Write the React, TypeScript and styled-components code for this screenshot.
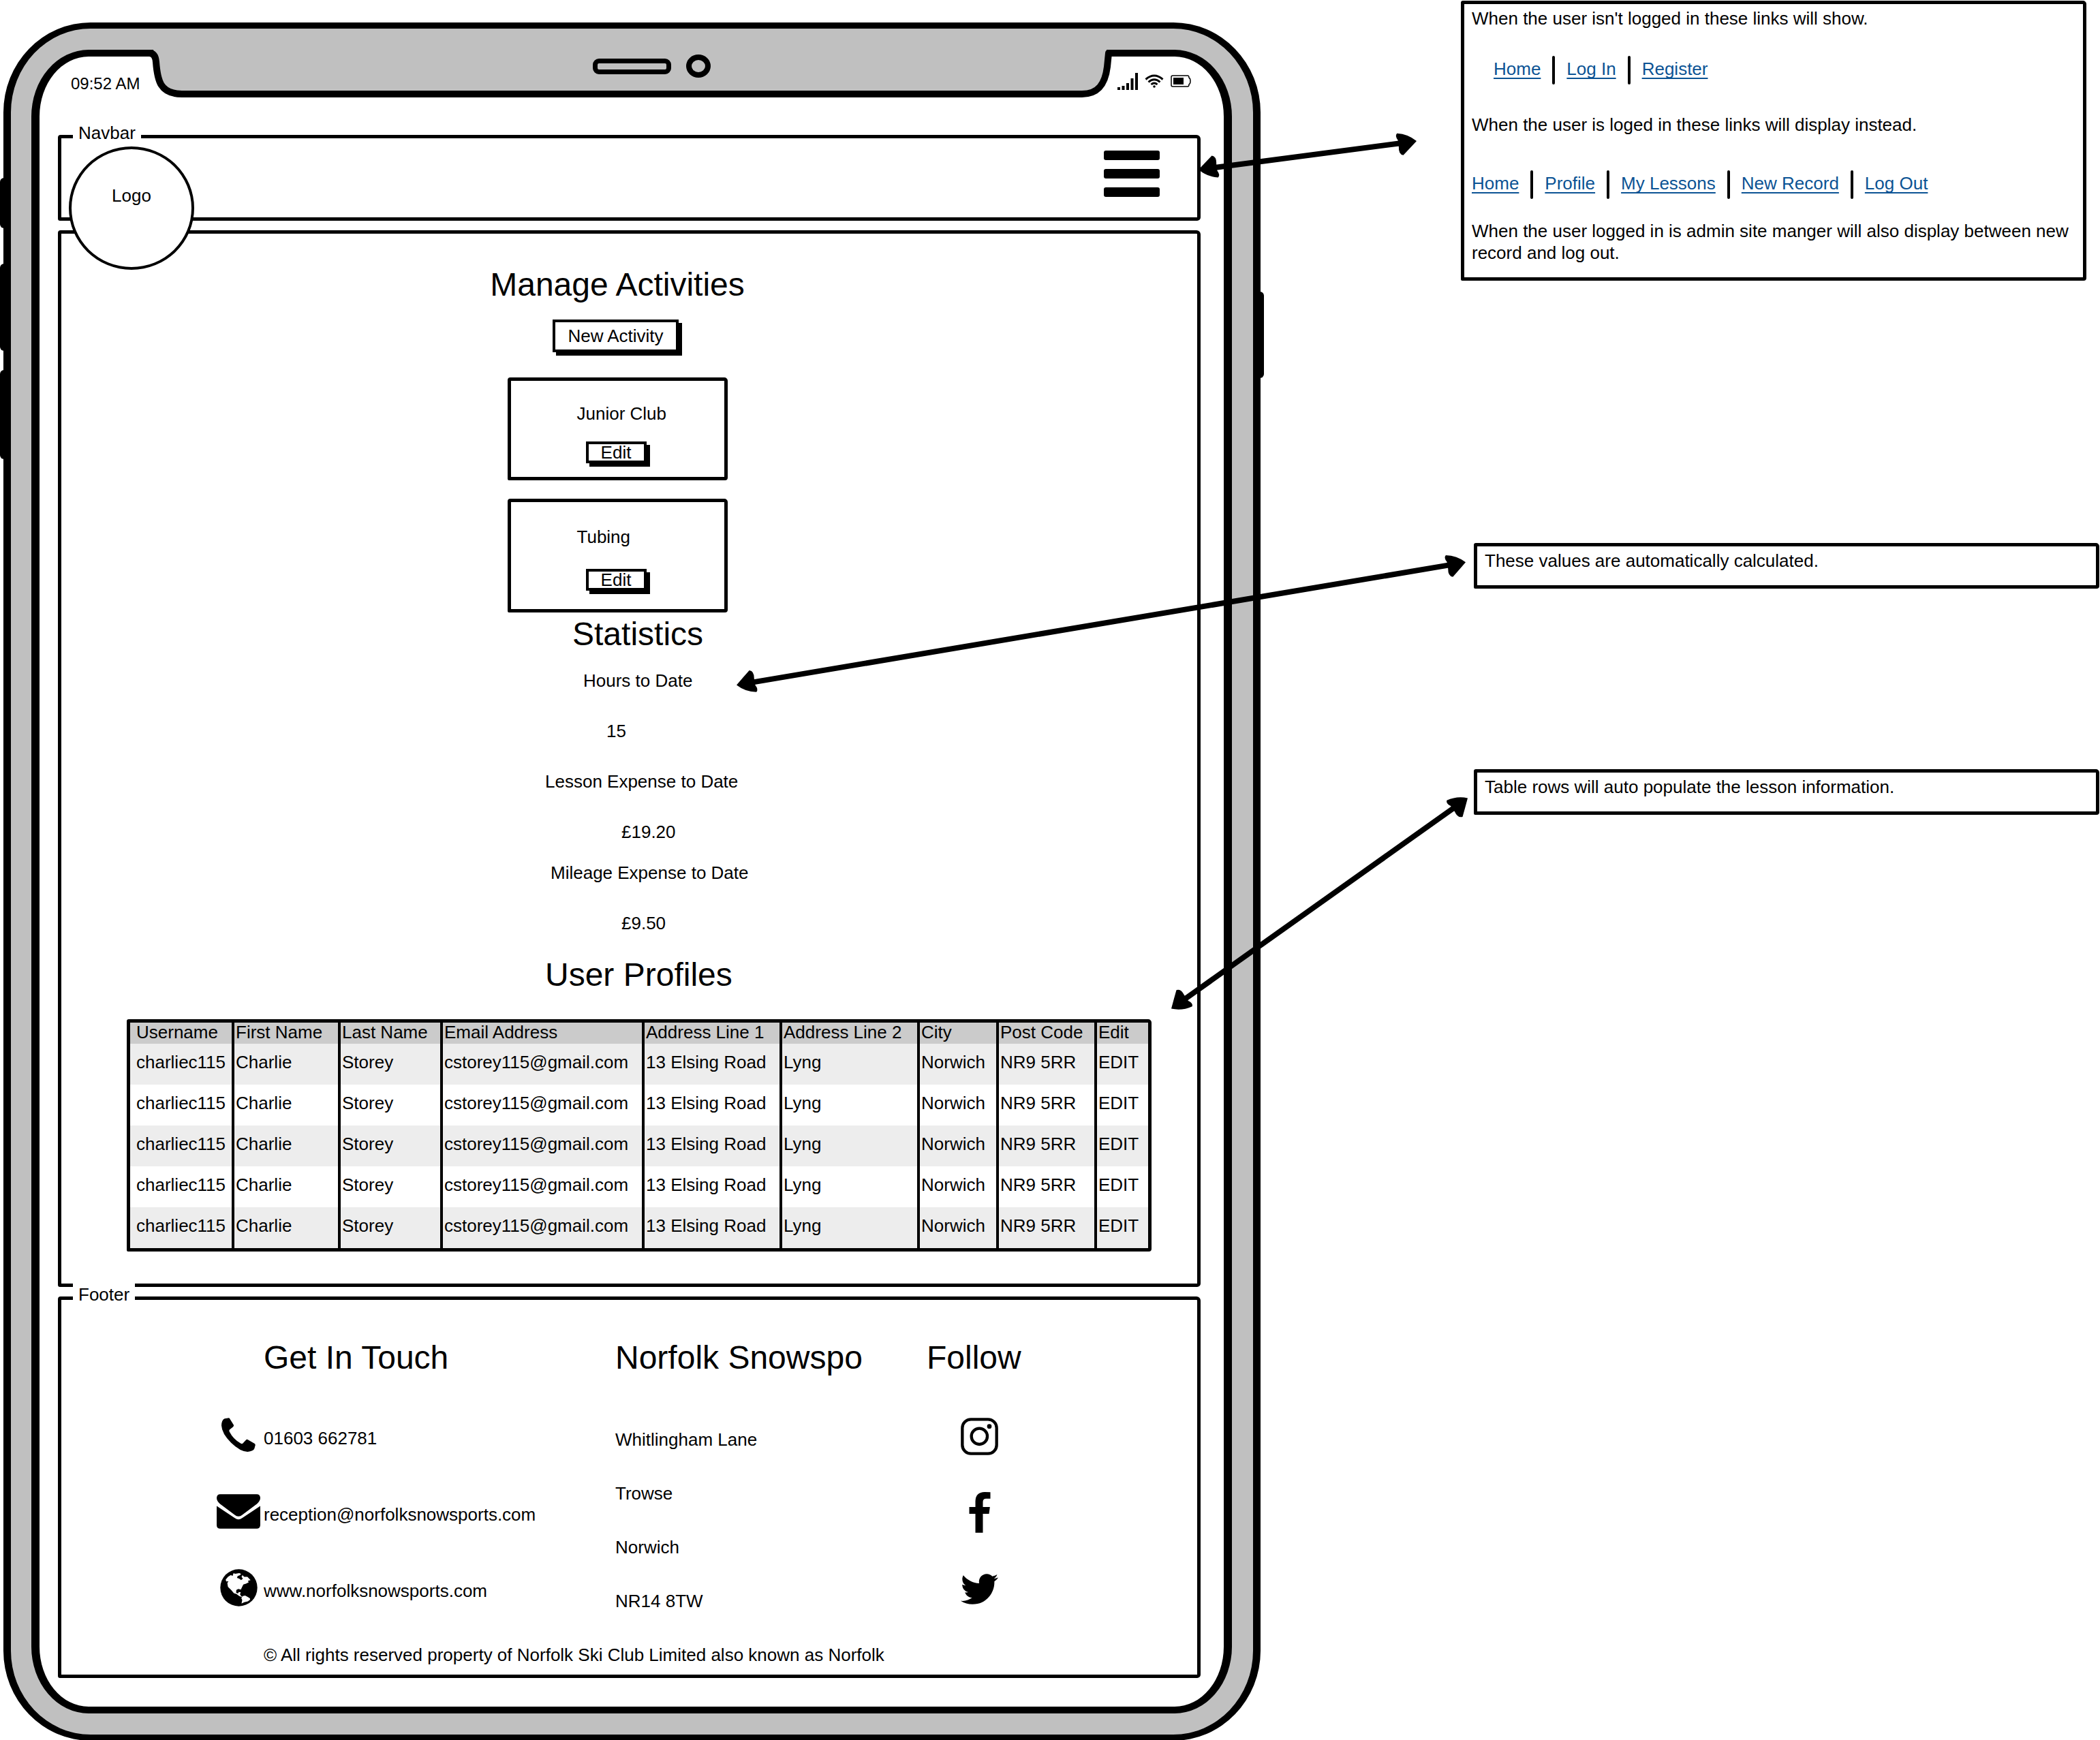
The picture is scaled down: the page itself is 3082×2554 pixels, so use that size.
import React from "react";
import styled, { createGlobalStyle } from "styled-components";
import { FaTwitter } from "react-icons/fa";

const INK = "#000000";
const METAL = "#c0c0c0";

const GlobalStyle = createGlobalStyle`
  *, *::before, *::after { box-sizing: border-box; }
  body { margin: 0; background: #ffffff; }
  body, button {
    font-family: "Liberation Sans", Arial, sans-serif;
    font-size: 26px;
    line-height: 32px;
    color: ${INK};
  }
  h1, h2, p, dl, dt, dd, ul { margin: 0; padding: 0; font-weight: 400; }
  ul { list-style: none; }
  svg { display: block; }
`;

/* ---------- page ---------- */

const Page = styled.div`
  position: relative;
  display: grid;
  grid-template-columns: 1845fr 937fr;
  column-gap: 294px;
  align-items: start;
  padding: 0 1px 0 5px;
`;

const Arrows = styled.svg`
  position: absolute;
  inset: 0;
  width: 100%;
  height: 100%;
  pointer-events: none;
`;

/* ---------- tablet ---------- */

const Tablet = styled.div`
  position: relative;
  margin-top: 33px;
  padding: 31px 31px 31px 30px;
  border: solid ${INK};
  border-width: 9px 11px;
  border-radius: 128px / 132px;
  background: ${METAL};
`;

const SideKey = styled.span<{ $side: "left" | "right"; $top: number; $height: number }>`
  position: absolute;
  ${(p) => p.$side}: -16px;
  top: ${(p) => p.$top}px;
  width: 15px;
  height: ${(p) => p.$height}px;
  border-radius: 6px;
  background: ${INK};
`;

const Screen = styled.div`
  position: relative;
  padding: 0 34px 42px 27px;
  border: solid ${INK};
  border-width: 10px 12px;
  border-radius: 84px / 98px;
  background: #ffffff;
`;

const Notch = styled.div`
  position: absolute;
  top: -10px;
  left: 147px;
  right: 156px;
  display: flex;
`;

const NotchBody = styled.div`
  flex: 1;
  display: flex;
  align-items: center;
  justify-content: center;
  gap: 22px;
  height: 70px;
  padding: 0 0 12px 62px;
  border-bottom: 10px solid ${INK};
  background: ${METAL};
`;

const Speaker = styled.span`
  width: 115px;
  height: 23px;
  border: 7px solid ${INK};
  border-radius: 9px;
`;

const Camera = styled.span`
  width: 36px;
  height: 34px;
  border: 8px solid ${INK};
  border-radius: 50%;
`;

const StatusBar = styled.div`
  display: flex;
  justify-content: space-between;
  align-items: flex-start;
  height: 115px;
  padding: 24px 14px 0 19px;
  font-size: 24px;
`;

const StatusIcons = styled.div`
  display: flex;
  align-items: center;
  gap: 10px;
  height: 24px;
`;

/* ---------- wireframe panels ---------- */

const Panels = styled.div`
  display: flex;
  flex-direction: column;
  gap: 14px;
`;

const Panel = styled.div`
  position: relative;
  border: solid ${INK};
  border-width: 5px;
  border-radius: 4px 6px 5px 3px;
`;

const PanelLabel = styled.span`
  position: absolute;
  top: -24px;
  left: 17px;
  padding: 0 8px;
  background: #ffffff;
`;

const NavPanel = styled(Panel).attrs({ as: "nav" })`
  display: flex;
  justify-content: flex-end;
  padding: 18px 55px 30px 0;
`;

const Logo = styled.div`
  position: absolute;
  z-index: 1;
  top: 12px;
  left: 11px;
  width: 184px;
  height: 181px;
  padding-top: 52px;
  border: 4px solid ${INK};
  border-radius: 50%;
  background: #ffffff;
  text-align: center;
`;

const MenuButton = styled.button`
  display: flex;
  flex-direction: column;
  gap: 13px;
  width: 82px;
  padding: 0;
  border: 0;
  background: none;
`;

const MenuBar = styled.span`
  height: 14px;
  border-radius: 3px;
  background: ${INK};
`;

const MainPanel = styled(Panel).attrs({ as: "main" })`
  padding: 47px 0;
`;

const Title = styled.h1`
  font-size: 48px;
  line-height: 56px;
  white-space: nowrap;
`;

const Heading = styled(Title).attrs({ as: "h2" })<{ $indent?: number }>`
  margin-left: ${(p) => p.$indent ?? 0}px;
`;

const Activities = styled.section`
  display: flex;
  flex-direction: column;
  align-items: center;
  margin-right: 35px;
`;

const SketchButton = styled.button`
  padding: 0 18px;
  border: 4px solid ${INK};
  background: #ffffff;
  box-shadow: 5px 5px 0 ${INK};
  white-space: nowrap;
`;

const NewActivity = styled(SketchButton)`
  height: 48px;
  margin: 23px 5px 37px 0;
`;

const EditButton = styled(SketchButton)`
  width: 89px;
  height: 32px;
  margin-left: 13px;
  line-height: 24px;
`;

const ActivityCards = styled.div`
  display: flex;
  flex-direction: column;
  gap: 27px;
`;

const ActivityCard = styled.article<{ $roomy?: boolean }>`
  display: flex;
  flex-direction: column;
  align-items: flex-start;
  gap: ${(p) => (p.$roomy ? 31 : 25)}px;
  width: 323px;
  padding: ${(p) => (p.$roomy ? "35px 0 27px 97px" : "32px 0 20px 97px")};
  border: 5px solid ${INK};
  border-radius: 4px 5px 4px 2px;
`;

const Statistics = styled.section`
  width: 320px;
  margin: 4px auto 32px 710px;
`;

const StatList = styled.dl`
  padding-top: 24px;
`;

const StatName = styled.dt<{ $indent: number; $gap: number }>`
  margin: ${(p) => p.$gap}px 0 0 ${(p) => p.$indent}px;
  white-space: nowrap;
`;

const StatValue = styled.dd<{ $indent: number }>`
  margin: 42px 0 0 ${(p) => p.$indent}px;
`;

/* ---------- profile table ---------- */

const TableFrame = styled.div`
  margin: 37px 67px 0 96px;
  border: 5px solid ${INK};
  border-radius: 3px 5px 4px 2px;
`;

const ProfileTable = styled.table`
  width: 100%;
  table-layout: fixed;
  border-spacing: 0;
`;

const cell = `
  padding: 0 0 0 2px;
  border-right: 4px solid ${INK};
  text-align: left;
  vertical-align: top;
  font-weight: 400;
  white-space: nowrap;
  &:first-child { padding-left: 9px; }
  &:last-child { border-right: 0; }
`;

const HeadCell = styled.th`
  ${cell}
  height: 31px;
  line-height: 28px;
  background: #cbcbcb;
`;

const BodyCell = styled.td`
  ${cell}
  && { padding-top: 11px; }
  height: 60px;
`;

const BodyRow = styled.tr`
  &:nth-child(odd) { background: #ededed; }
`;

/* ---------- footer ---------- */

const FooterPanel = styled(Panel).attrs({ as: "footer" })`
  padding: 57px 0 13px 228px;
`;

const FooterColumns = styled.div`
  display: grid;
  grid-template-columns: 585fr 457fr 397fr;
`;

const ContactList = styled.ul`
  display: flex;
  flex-direction: column;
  gap: 56px;
  padding-top: 57px;
`;

const ContactRow = styled.li`
  display: flex;
  align-items: center;
  gap: 5px;
  height: 56px;
`;

const ContactIcon = styled.span`
  display: flex;
  justify-content: center;
  width: 64px;
`;

const ContactText = styled.span`
  padding-top: 10px;
`;

const AddressList = styled.div`
  display: flex;
  flex-direction: column;
  gap: 47px;
  padding-top: 76px;
`;

const SocialList = styled.ul`
  display: flex;
  flex-direction: column;
  gap: 52px;
  width: 155px;
  padding-top: 57px;
`;

const SocialRow = styled.li`
  display: flex;
  align-items: center;
  justify-content: center;
  height: 60px;
`;

const SocialLink = styled.a`
  color: ${INK};
`;

const Copyright = styled.p`
  margin: 47px 0 0 69px;
`;

/* ---------- notes ---------- */

const Notes = styled.aside`
  padding-top: 1px;
`;

const Note = styled.section<{ $shift?: boolean; $above?: number }>`
  width: calc(100% - 19px);
  margin-top: ${(p) => p.$above ?? 0}px;
  margin-left: ${(p) => (p.$shift ? 19 : 0)}px;
  padding: 5px 4px 20px 11px;
  border: 5px solid ${INK};
  border-radius: 3px 5px 4px 2px;
`;

const LinkRow = styled.div<{ $indent?: boolean; $above: number; $below: number }>`
  display: flex;
  gap: 17px;
  margin: ${(p) => p.$above}px 0 ${(p) => p.$below}px ${(p) => (p.$indent ? 32 : 0)}px;
`;

const NoteLink = styled.a`
  margin-top: 3px;
  color: #0b5394;
  text-decoration: underline;
  text-decoration-thickness: 2px;
  text-decoration-skip-ink: none;
  text-underline-offset: 4px;
`;

const Divider = styled.span`
  width: 4px;
  height: 42px;
  border-radius: 2px;
  background: ${INK};
`;

/* ---------- drawings ---------- */

const SignalIcon = () => (
  <svg width="30" height="26" viewBox="0 0 30 26">
    <path d="M0 22h4v4H0zM6.5 20h4v6h-4zM13 16h4v10h-4zM19.500 9h4v17h-4zM26 1h4v25h-4z" />
  </svg>
);

const WifiIcon = () => (
  <svg width="28" height="20" viewBox="0 0 28 20" fill="none" stroke={INK} strokeWidth="3">
    <path d="M1.500 7.500Q14-3.500 26.500 7.500M5.500 11.500Q14 4 22.500 11.500M9.500 15Q14 11 18.500 15" />
    <circle cx="14" cy="18" r="1.800" fill={INK} stroke="none" />
  </svg>
);

const BatteryIcon = () => (
  <svg width="30" height="18" viewBox="0 0 30 18">
    <path d="M3 1H25Q27 1 27 4Q29 5 29 9Q29 13 27 14Q27 17 25 17H3Q1 17 1 15V3Q1 1 3 1Z" fill="none" stroke={INK} strokeWidth="1.500" />
    <path d="M4 4H19V14H4Z" />
  </svg>
);

const PhoneIcon = () => (
  <svg width="50" height="50" viewBox="72 32 151 151">
    <path d="M105 33Q108 34 110 38L126 64Q128 68 124 72L108 85Q105 88 107 93Q125 128 158 146Q163 149 167 145L181 130Q184 127 188 129L218 146Q223 148 222 154L218 169Q214 180 188 183Q155 182 115 143Q74 103 72 66Q73 42 86 36Z" />
  </svg>
);

const MailIcon = () => (
  <svg width="64" height="51" viewBox="54 369 192 152">
    <path d="M54 385Q55 369 70 369H230Q245 369 246 385Q246 398 232 411L168 459Q150 474 132 459L68 411Q54 399 54 385Z" />
    <path d="M54 421L134 474Q150 486 166 474L246 421V505Q245 521 230 521H70Q54 521 54 505Z" />
  </svg>
);

const GlobeIcon = () => (
  <svg width="55" height="55" viewBox="65 703 166 166">
    <circle cx="148" cy="786" r="82" />
    <path
      fill="#ffffff"
      d="M90 750L100 738L112 730L121 733L124 722L133 724L150 721L158 725L152 731L143 734L140 742L150 746L158 752L166 746L160 738L164 730L172 738L186 738L200 752L188 756L192 762L180 768L168 772L162 784L157 794L146 791L137 796L136 808L144 812L148 805L157 806L153 815L158 822L166 829L150 823L138 814L126 810L114 796L100 782L97 766L102 757L92 758Z"
    />
    <path fill="#ffffff" d="M165 823L176 821L186 826L197 833L198 839L188 846L172 850L160 856L163 840L159 832Z" />
  </svg>
);

const InstagramIcon = () => (
  <svg width="55" height="55" viewBox="36 32 165 165" fill="none" stroke={INK} strokeWidth="13">
    <rect x="43" y="39" width="151" height="151" rx="38" />
    <circle cx="118" cy="114" r="35" />
    <circle cx="162" cy="70" r="10" fill={INK} stroke="none" />
  </svg>
);

const FacebookIcon = () => (
  <svg width="32" height="60" viewBox="72 372 95 180">
    <path d="M166 373V401H147Q133 401 133 416V438H164L160 468H133V551H100V468H73V438H100V412Q101 373 141 372Z" />
  </svg>
);

const HEAD = "M0 0Q12-10 22-18Q29-16 27-5V5Q31 12 27 15Q11 12 0 0Z";

const Arrow = ({ from, to }: { from: [number, number]; to: [number, number] }) => {
  const dx = to[0] - from[0];
  const dy = to[1] - from[1];
  const length = Math.hypot(dx, dy);
  const angle = (Math.atan2(dy, dx) * 180) / Math.PI;
  return (
    <g transform={`translate(${from[0]} ${from[1]}) rotate(${angle})`}>
      <path d={`M20 0H${length - 20}`} stroke={INK} strokeWidth="8" />
      <path d={HEAD} />
      <path d={HEAD} transform={`translate(${length} 0) rotate(180)`} />
    </g>
  );
};

/* ---------- data ---------- */

const stats = [
  { name: "Hours to Date", value: "15", nameIndent: 56, valueIndent: 90, gap: 0 },
  { name: "Lesson Expense to Date", value: "£19.20", nameIndent: 0, valueIndent: 112, gap: 42 },
  { name: "Mileage Expense to Date", value: "£9.50", nameIndent: 8, valueIndent: 112, gap: 28 },
];

const columns = [
  { title: "Username", value: "charliec115", width: 153 },
  { title: "First Name", value: "Charlie", width: 156 },
  { title: "Last Name", value: "Storey", width: 150 },
  { title: "Email Address", value: "cstorey115@gmail.com", width: 296 },
  { title: "Address Line 1", value: "13 Elsing Road", width: 202 },
  { title: "Address Line 2", value: "Lyng", width: 202 },
  { title: "City", value: "Norwich", width: 116 },
  { title: "Post Code", value: "NR9 5RR", width: 144 },
  { title: "Edit", value: "EDIT", width: 75 },
];

const contacts = [
  { icon: <PhoneIcon />, text: "01603 662781" },
  { icon: <MailIcon />, text: "reception@norfolksnowsports.com" },
  { icon: <GlobeIcon />, text: "www.norfolksnowsports.com" },
];

const address = ["Whitlingham Lane", "Trowse", "Norwich", "NR14 8TW"];

const socials = [
  { name: "Instagram", icon: <InstagramIcon /> },
  { name: "Facebook", icon: <FacebookIcon /> },
  { name: "Twitter", icon: <FaTwitter size={55} /> },
];

const Links = ({ items, ...row }: { items: string[]; $indent?: boolean; $above: number; $below: number }) => (
  <LinkRow {...row}>
    {items.map((item, i) => (
      <React.Fragment key={item}>
        {i > 0 && <Divider />}
        <NoteLink href="#">{item}</NoteLink>
      </React.Fragment>
    ))}
  </LinkRow>
);

export default function App() {
  return (
    <>
      <GlobalStyle />
      <Page>
        <Tablet>
          <SideKey $side="left" $top={219} $height={74} />
          <SideKey $side="left" $top={345} $height={128} />
          <SideKey $side="left" $top={501} $height={131} />
          <SideKey $side="right" $top={386} $height={127} />
          <Screen>
            <Notch>
              <svg width="75" height="70" viewBox="0 0 75 70">
                <path d="M20 0L24 18C26 45 30 65 62 65H75V0Z" fill={METAL} />
                <path d="M0 5H14Q23 5 24 18C26 45 30 65 62 65H75" fill="none" stroke={INK} strokeWidth="10" />
              </svg>
              <NotchBody>
                <Speaker />
                <Camera />
              </NotchBody>
              <svg width="70" height="70" viewBox="0 0 70 70">
                <path d="M0 0H54V25C52 50 42 65 18 65H0Z" fill={METAL} />
                <path d="M0 65H18C42 65 52 50 55 25L57 5H70" fill="none" stroke={INK} strokeWidth="10" strokeLinejoin="round" />
              </svg>
            </Notch>
            <StatusBar>
              <span>09:52 AM</span>
              <StatusIcons>
                <SignalIcon />
                <WifiIcon />
                <BatteryIcon />
              </StatusIcons>
            </StatusBar>
            <Panels>
              <NavPanel>
                <PanelLabel>Navbar</PanelLabel>
                <Logo>Logo</Logo>
                <MenuButton aria-label="Menu">
                  <MenuBar />
                  <MenuBar />
                  <MenuBar />
                </MenuButton>
              </NavPanel>

              <MainPanel>
                <Activities>
                  <Title>Manage Activities</Title>
                  <NewActivity>New Activity</NewActivity>
                  <ActivityCards>
                    <ActivityCard>
                      <span>Junior Club</span>
                      <EditButton>Edit</EditButton>
                    </ActivityCard>
                    <ActivityCard $roomy>
                      <span>Tubing</span>
                      <EditButton>Edit</EditButton>
                    </ActivityCard>
                  </ActivityCards>
                </Activities>

                <Statistics>
                  <Heading $indent={40}>Statistics</Heading>
                  <StatList>
                    {stats.map((s) => (
                      <React.Fragment key={s.name}>
                        <StatName $indent={s.nameIndent} $gap={s.gap}>{s.name}</StatName>
                        <StatValue $indent={s.valueIndent}>{s.value}</StatValue>
                      </React.Fragment>
                    ))}
                  </StatList>
                </Statistics>

                <Heading $indent={710}>User Profiles</Heading>
                <TableFrame>
                  <ProfileTable>
                    <colgroup>
                      {columns.map((c) => (
                        <col key={c.title} width={c.width} />
                      ))}
                    </colgroup>
                    <thead>
                      <tr>
                        {columns.map((c) => (
                          <HeadCell key={c.title} scope="col">{c.title}</HeadCell>
                        ))}
                      </tr>
                    </thead>
                    <tbody>
                      {[1, 2, 3, 4, 5].map((row) => (
                        <BodyRow key={row}>
                          {columns.map((c) => (
                            <BodyCell key={c.title}>{c.value}</BodyCell>
                          ))}
                        </BodyRow>
                      ))}
                    </tbody>
                  </ProfileTable>
                </TableFrame>
              </MainPanel>

              <FooterPanel>
                <PanelLabel>Footer</PanelLabel>
                <FooterColumns>
                  <section>
                    <Heading $indent={69}>Get In Touch</Heading>
                    <ContactList>
                      {contacts.map((c) => (
                        <ContactRow key={c.text}>
                          <ContactIcon>{c.icon}</ContactIcon>
                          <ContactText>{c.text}</ContactText>
                        </ContactRow>
                      ))}
                    </ContactList>
                  </section>
                  <section>
                    <Heading>Norfolk Snowspo</Heading>
                    <AddressList>
                      {address.map((line) => (
                        <span key={line}>{line}</span>
                      ))}
                    </AddressList>
                  </section>
                  <section>
                    <Heading>Follow</Heading>
                    <SocialList>
                      {socials.map((s) => (
                        <SocialRow key={s.name}>
                          <SocialLink href="#" aria-label={s.name}>{s.icon}</SocialLink>
                        </SocialRow>
                      ))}
                    </SocialList>
                  </section>
                </FooterColumns>
                <Copyright>© All rights reserved property of Norfolk Ski Club Limited also known as Norfolk</Copyright>
              </FooterPanel>
            </Panels>
          </Screen>
        </Tablet>

        <Notes>
          <Note>
            <p>When the user isn't logged in these links will show.</p>
            <Links items={["Home", "Log In", "Register"]} $indent $above={39} $below={43} />
            <p>When the user is loged in these links will display instead.</p>
            <Links items={["Home", "Profile", "My Lessons", "New Record", "Log Out"]} $above={51} $below={31} />
            <p>When the user logged in is admin site manger will also display between new record and log out.</p>
          </Note>
          <Note $shift $above={385}>
            <p>These values are automatically calculated.</p>
          </Note>
          <Note $shift $above={265}>
            <p>Table rows will auto populate the lesson information.</p>
          </Note>
        </Notes>

        <Arrows viewBox="0 0 3082 2554" preserveAspectRatio="none" aria-hidden="true">
          <Arrow from={[1759, 249]} to={[2079, 207]} />
          <Arrow from={[1081, 1005]} to={[2151, 825]} />
          <Arrow from={[1719, 1480]} to={[2154, 1171]} />
        </Arrows>
      </Page>
    </>
  );
}
